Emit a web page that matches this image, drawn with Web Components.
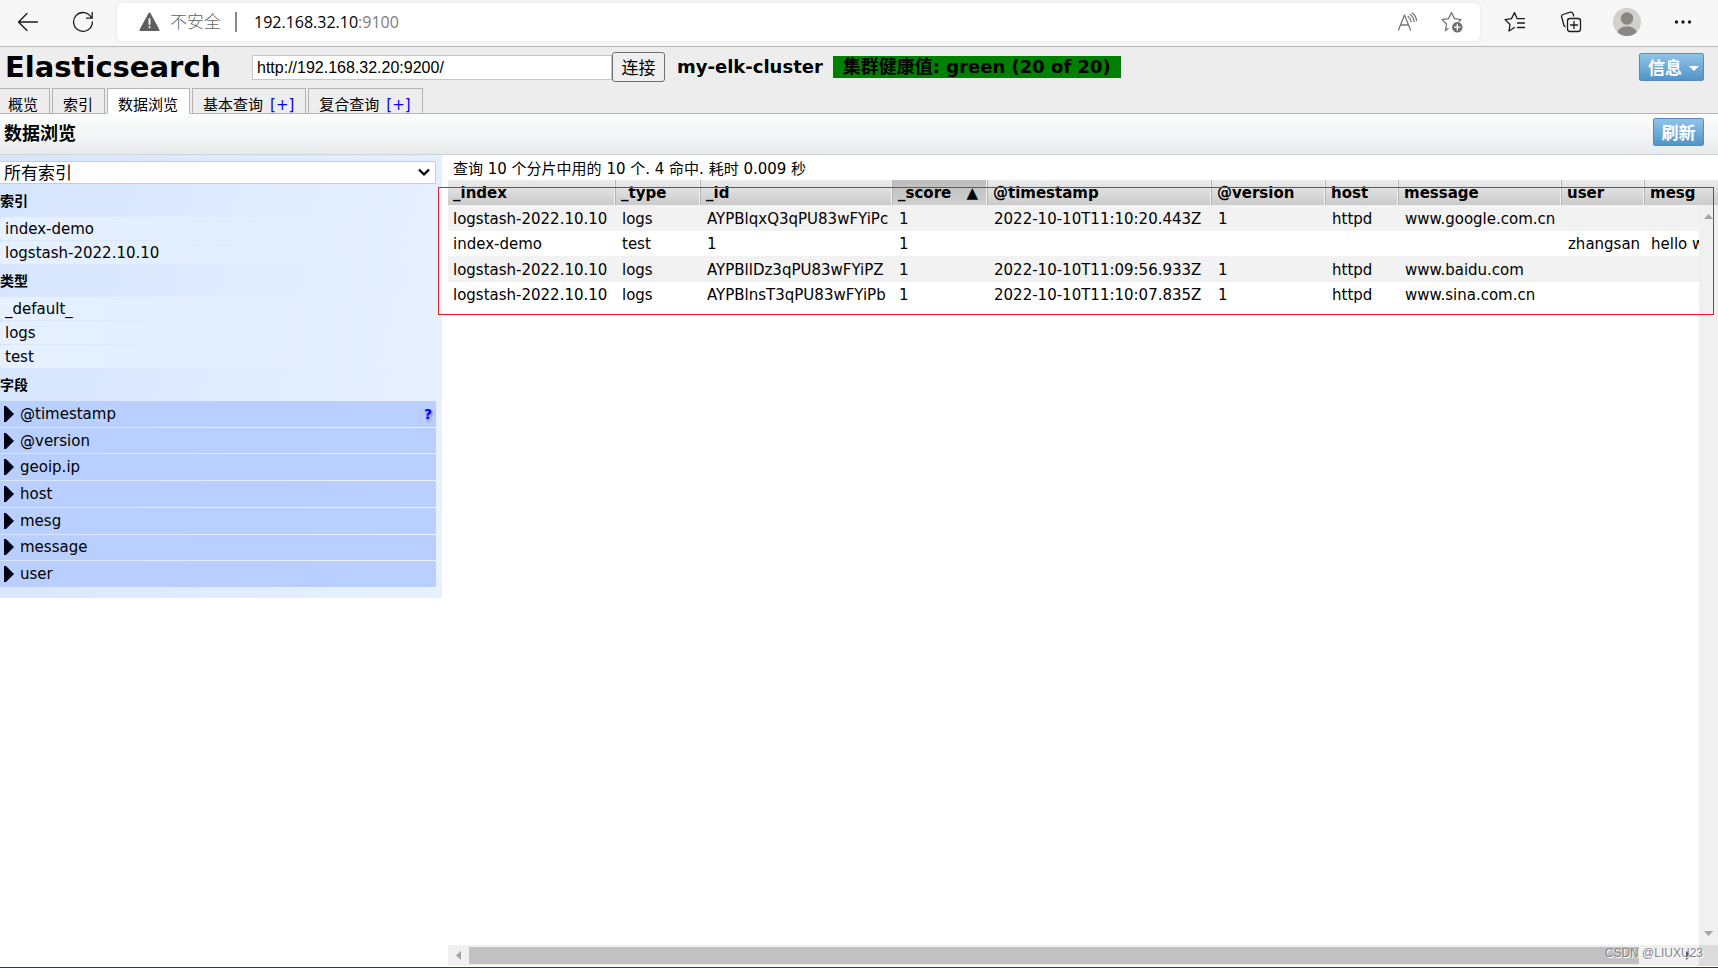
<!DOCTYPE html>
<html lang="zh-CN">
<head>
<meta charset="utf-8">
<title>elasticsearch-head</title>
<style>
html, body { margin: 0; height: 100%; }
body { font: 15px/20px "DejaVu Sans", "Noto Sans CJK SC", sans-serif; color: #000; background: #fff; }
</style>
</head>
<body>
<es-app></es-app>

<template id="browser-bar">
<style>
:host { display: flex; align-items: center; height: 46px; flex: none; background: #f7f7f7; border-bottom: 1px solid #b8b8b8; box-sizing: content-box; }
button { border: 0; padding: 0; background: none; display: grid; place-items: center; width: 55px; height: 38px; flex: none; }
svg { display: block; fill: none; stroke: #1a1a1a; stroke-width: 1.3; stroke-linecap: round; stroke-linejoin: round; }
.nav { display: flex; width: 117px; flex: none; margin-bottom: 2px; }
.address { flex: 1; min-width: 0; height: 38px; margin-bottom: 2px; border-radius: 6px; background: #fff; box-shadow: 0 0 4px #e4e4e4; display: flex; align-items: center; font-family: "Open Sans", "Noto Sans CJK SC", sans-serif; font-size: 16px; }
.warn { margin: 0 10px 0 22px; flex: none; }
.unsafe { font-size: 17px; color: #626262; font-weight: 300; }
.rule { width: 2px; height: 20px; background: #8a8a8a; margin: 0 17px 0 14px; }
.url { flex: 1; }
.port { color: #7c7c7c; }
.address svg.grey { stroke: #757575; }
.address button { width: 45px; }
.address button:last-child { margin-right: 6px; }
.tools { display: flex; margin-bottom: 2px; width: 238px; flex: none; }
.tools button { width: 56px; }
.tools button:first-child { margin-left: 7px; }
</style>
<div class="nav">
<button aria-label="返回"><svg width="22" height="20" viewBox="0 0 22 20"><path d="M20.500 10H1.500M10 1.500L1.500 10L10 18.500"/></svg></button>
<button aria-label="刷新页面"><svg width="22" height="22" viewBox="0 0 22 22"><path d="M19.300 6.500A9.400 9.400 0 1 0 20.400 11M20.200 1.500V7.200H14.500"/></svg></button>
</div>
<div class="address">
<svg class="warn" width="21" height="20" viewBox="0 0 21 20"><path d="M10.500 1.500L19.500 18H1.500Z" fill="#5f5f5f" stroke="#5f5f5f" stroke-width="2"/><path d="M10.500 7V12M10.500 15V15.300" stroke="#fff" stroke-width="1.800"/></svg>
<span class="unsafe">不安全</span><span class="rule"></span>
<span class="url">192.168.32.10<span class="port">:9100</span></span>
<button aria-label="朗读"><svg class="grey" width="20" height="20" viewBox="0 0 20 20"><path d="M1.500 18L7.500 3L13.500 18M3.500 13H11.500M11 4.500Q13.500 6 14 9.500M13 2.500Q16.500 4.500 17 9.500M15 1Q19 3.500 19.500 8.500"/></svg></button>
<button aria-label="收藏"><svg class="grey" width="22" height="22" viewBox="0 0 22 22"><path d="M7 17.500L4.500 19.500L5.500 13L1 8.600L7.500 7.600L10.500 1.500L13.500 7.600L20 8.600L18 10.500"/><circle cx="16.300" cy="16.200" r="5.200" fill="#6d6d6d" stroke="none"/><path d="M16.300 13.500V19M13.600 16.200H19" stroke="#fff"/></svg></button>
</div>
<div class="tools">
<button aria-label="收藏夹"><svg width="22" height="22" viewBox="0 0 22 22"><path d="M10.500 16.500L5 20L6 13.500L1 8.600L7.500 7.600L10.500 1.500L13 7.600H20.500M13.500 12H20.500M13.500 16.500H20.500"/></svg></button>
<button aria-label="集锦"><svg width="22" height="22" viewBox="0 0 22 22"><rect x="7.500" y="7.500" width="13" height="13" rx="2.500"/><path d="M14 10.500V17.500M10.500 14H17.500M5 15.500L4 14.500L1.500 5.500Q1.300 4 3 3.500L10.500 1.200Q12.500 1 13 2.800L13.700 5"/></svg></button>
<button aria-label="个人资料"><svg width="28" height="28" viewBox="0 0 28 28" stroke="none"><defs><clipPath id="c"><circle cx="14" cy="14" r="14"/></clipPath></defs><g clip-path="url(#c)" stroke="none"><rect width="28" height="28" fill="#d3d0cc"/><circle cx="14" cy="10.500" r="6.200" fill="#8b8784"/><path d="M3.500 28C4 21 8 18.500 14 18.500S24 21 24.500 28Z" fill="#8b8784"/></g></svg></button>
<button aria-label="更多"><svg width="18" height="6" viewBox="0 0 18 6"><g fill="#1a1a1a" stroke="none"><circle cx="2.500" cy="3" r="1.700"/><circle cx="9" cy="3" r="1.700"/><circle cx="15.500" cy="3" r="1.700"/></g></svg></button>
</div>
</template>

<template id="action-button">
<style>
:host { display: block; }
button { display: flex; align-items: center; justify-content: center; gap: 7px; width: 100%; height: 28px; box-sizing: border-box; padding: 2px 8px 0; border: 1px solid #5c88c8; border-radius: 2px; background: linear-gradient(#90c3e8, #5195c9); color: #fff; font: bold 17px/24px "DejaVu Sans", "Noto Sans CJK SC", sans-serif; white-space: nowrap; }
i { display: none; border: 5px solid transparent; border-top-color: #fff; border-bottom: 0; }
:host([menu]) i { display: block; }
:host([menu]) button { padding-right: 4px; }
</style>
<button><slot></slot><i></i></button>
</template>

<template id="cluster-header">
<style>
:host { display: flex; flex-direction: column; height: 66px; flex: none; background: #ededed; border-bottom: 1px solid #b4b4b4; }
.top { display: flex; align-items: center; height: 38px; padding: 2px 14px 0 0; box-sizing: border-box; }
h1 { margin: 0; padding-left: 5px; width: 252px; box-sizing: border-box; font-size: 29px; line-height: 36px; flex: none; }
form { display: flex; align-items: center; flex: none; }
input { box-sizing: border-box; width: 360px; height: 25px; border: 1px solid #c6c6c6; padding: 2px 4px 0; background: #fff; font: 16px "Liberation Sans", sans-serif; color: #000; }
form button { width: 53px; height: 30px; box-sizing: border-box; padding: 0; border: 1px solid #6f6f6f; border-radius: 3px; background: #efefef; color: #000; font: 17px/24px "Noto Sans CJK SC", sans-serif; }
.name { margin-left: 12px; font: bold 18px/22px "DejaVu Sans", sans-serif; white-space: nowrap; }
.health { margin: 0 auto 0 10px; padding: 0 10px; height: 22px; background: #008000; font-weight: bold; font-size: 18px; line-height: 22px; white-space: nowrap; }
nav { display: flex; gap: 2px; flex: 1; margin-bottom: -1px; align-items: flex-start; padding-top: 3px; }
.tab { box-sizing: border-box; height: 26px; border: 1px solid #b4b4b4; padding: 5px 11px 0 10px; line-height: 22px; white-space: nowrap; overflow: hidden; }
.tab:first-child { border-left: 0; padding-left: 8px; }
.tab.on { background: #fff; border-bottom-color: #fff; }
a { color: inherit; text-decoration: none; }
.add { color: #00f; margin-left: 7px; }
</style>
<div class="top">
<h1>Elasticsearch</h1>
<form><input type="text" aria-label="连接地址" value="http://192.168.32.20:9200/"><button type="button">连接</button></form>
<span class="name">my-elk-cluster</span>
<span class="health">集群健康值: green (20 of 20)</span>
<action-button menu>信息</action-button>
</div>
<nav>
<div class="tab"><a href="#overview">概览</a></div>
<div class="tab"><a href="#indices">索引</a></div>
<div class="tab on"><a href="#browser">数据浏览</a></div>
<div class="tab"><a href="#basic">基本查询</a><a class="add" href="#basic-new">[+]</a></div>
<div class="tab"><a href="#compound">复合查询</a><a class="add" href="#compound-new">[+]</a></div>
</nav>
</template>

<template id="page-title">
<style>
:host { display: flex; align-items: center; justify-content: space-between; height: 40px; flex: none; padding: 0 14px 0 4px; background: linear-gradient(#fdfefe, #e8ebed); border-bottom: 1px solid #ced3d6; }
h2 { margin: 0; font-size: 18px; line-height: 26px; }
action-button { width: 51px; margin-bottom: 4px; }
</style>
<h2><slot></slot></h2>
<action-button>刷新</action-button>
</template>

<template id="filter-group">
<style>
:host { display: block; }
h3 { margin: 0; font-size: 14px; line-height: 20px; padding: 6px 0; }
</style>
<h3></h3>
<slot></slot>
</template>

<template id="filter-item">
<style>
:host { display: block; margin-bottom: 1px; }
a { display: block; height: 23px; line-height: 24px; padding-left: 5px; border-radius: 4px; background: linear-gradient(90deg, #e7f1ff, #e7f1ff00); color: #000; text-decoration: none; }
</style>
<a href="#filter"><slot></slot></a>
</template>

<template id="field-row">
<style>
:host { display: flex; align-items: center; background: #b8cfff; min-height: 0; overflow: hidden; }
button { flex: 1; display: flex; align-items: center; gap: 6px; border: 0; padding: 0 0 0 4px; background: none; color: #000; font: inherit; text-align: left; }
svg { display: block; }
a { display: none; margin-right: 4px; color: #00f; font-weight: bold; font-size: 14px; text-decoration: none; text-shadow: 1px 2px 3px #777; }
:host([help]) a { display: block; }
</style>
<button><svg width="10" height="16" viewBox="0 0 10 16"><path d="M0 0H2L10 8L2 16H0Z" fill="#000012"/></svg><slot></slot></button><a href="#help">?</a>
</template>

<template id="filter-panel">
<style>
:host { display: block; flex: none; width: 442px; box-sizing: border-box; padding: 6px 6px 11px 0; background: linear-gradient(100deg, #d6e5ff, #e8f1ff); }
.pick { position: relative; margin-bottom: 1px; }
select { display: block; appearance: none; width: 100%; height: 23px; box-sizing: border-box; padding: 0 4px 2px; border: 1px solid #ccc; border-left: 0; border-radius: 0; background: #fff; color: #000; font: 17px/19px "Noto Sans CJK SC", sans-serif; }
.pick svg { position: absolute; right: 6px; top: 7px; pointer-events: none; }
.fields { display: grid; grid-auto-rows: 1fr; gap: 1px; height: 186px; }
</style>
<div class="pick"><select aria-label="选择索引"><option>所有索引</option></select><svg width="12" height="9" viewBox="0 0 12 9"><path d="M1 1.500L6 6.500L11 1.500" fill="none" stroke="#000" stroke-width="2.200"/></svg></div>
<filter-group label="索引"><filter-item>index-demo</filter-item><filter-item>logstash-2022.10.10</filter-item></filter-group>
<filter-group label="类型"><filter-item>_default_</filter-item><filter-item>logs</filter-item><filter-item>test</filter-item></filter-group>
<filter-group label="字段"><div class="fields"><field-row help>@timestamp</field-row><field-row>@version</field-row><field-row>geoip.ip</field-row><field-row>host</field-row><field-row>mesg</field-row><field-row>message</field-row><field-row>user</field-row></div></filter-group>
</template>

<template id="result-grid">
<style>
:host { display: flex; flex-direction: column; flex: 1; min-width: 0; margin-left: 6px; }
.summary { margin: 0; padding: 4px 5px 1px; height: 20px; white-space: nowrap; }
.pane { position: relative; flex: 1; min-height: 0; }
.clip { overflow: hidden; height: 100%; }
table { width: 100%; table-layout: fixed; border-collapse: separate; border-spacing: 0; }
th, td { text-align: left; white-space: nowrap; overflow: hidden; box-sizing: border-box; }
th { height: 25px; line-height: 23px; padding: 2px 0 0 5px; border-left: 1px solid #b4b4b4; border-right: 1px solid #f2f2f2; background: linear-gradient(#ececec, #cacaca); }
th:first-child { border-left: 0; }
th:last-child { border-right: 0; }
th.sorted { background: linear-gradient(#bdbdbd, #cfcfcf); }
.sorted div { display: flex; justify-content: space-between; padding-right: 8px; }
td { height: 25px; line-height: 23px; padding: 2px 0 0 7px; }
td:first-child { padding-left: 5px; }
tr:nth-child(odd) td { height: 26px; background: #f2f2f2; }
.v { position: absolute; top: 25px; right: 0; bottom: 0; width: 19px; background: #f0f0f0; display: flex; flex-direction: column; align-items: center; justify-content: space-between; padding: 9px 0; box-sizing: border-box; }
.h { flex: none; display: flex; align-items: center; height: 21px; background: #f0f0f0; margin-bottom: 1px; }
.h .thumb { flex: 1; height: 17px; background: #c1c1c1; margin-left: 8px; }
.h .left { margin-left: 8px; }
.h .right { margin: 0 8px 0 47px; }
.h .corner { width: 19px; height: 21px; background: #dcdcdc; }
svg { display: block; flex: none; }
.mark { position: absolute; left: -10px; right: 4px; top: 7px; height: 126px; border: 1px solid #ed1c24; pointer-events: none; }
</style>
<p class="summary">查询 10 个分片中用的 10 个. 4 命中. 耗时 0.009 秒</p>
<div class="pane">
<div class="clip"><table><colgroup></colgroup><thead><tr></tr></thead><tbody></tbody></table></div>
<div class="v"><svg width="9" height="5" viewBox="0 0 9 5"><path d="M0 5L4.500 0L9 5Z" fill="#a3a3a3"/></svg><svg width="9" height="5" viewBox="0 0 9 5"><path d="M0 0L4.500 5L9 0Z" fill="#a3a3a3"/></svg></div>
<div class="mark"></div>
</div>
<div class="h"><svg class="left" width="5" height="9" viewBox="0 0 5 9"><path d="M5 0L0 4.500L5 9Z" fill="#a3a3a3"/></svg><div class="thumb"></div><svg class="right" width="5" height="9" viewBox="0 0 5 9"><path d="M0 0L5 4.500L0 9Z" fill="#444"/></svg><div class="corner"></div></div>
</template>

<template id="es-app">
<style>
:host { display: flex; flex-direction: column; height: 100vh; box-sizing: border-box; border-bottom: 1px solid #1d4257; position: relative; overflow: hidden; }
main { flex: 1; display: flex; align-items: stretch; min-height: 0; }
filter-panel { align-self: flex-start; }
.credit { position: absolute; right: 15px; bottom: 6px; font: 12px/16px "Liberation Sans", sans-serif; color: #858585; text-shadow: 1px 1px 0 #fff; }
</style>
<browser-bar></browser-bar>
<cluster-header></cluster-header>
<page-title>数据浏览</page-title>
<main><filter-panel></filter-panel><result-grid></result-grid></main>
<span class="credit">CSDN @LIUXU23</span>
</template>

<script>
class Base extends HTMLElement {
  constructor() {
    super();
    const t = document.getElementById(this.localName);
    this.attachShadow({ mode: "open" }).append(t.content.cloneNode(true));
  }
}
for (const name of ["browser-bar", "action-button", "cluster-header", "page-title", "filter-item", "field-row"])
  customElements.define(name, class extends Base {});

customElements.define("filter-group", class extends Base {
  connectedCallback() { this.shadowRoot.querySelector("h3").textContent = this.getAttribute("label"); }
});
customElements.define("filter-panel", class extends Base {});

const columns = [["_index", 167], ["_type", 85], ["_id", 192], ["_score", 95], ["@timestamp", 224],
  ["@version", 114], ["host", 73], ["message", 163], ["user", 83], ["mesg", 0]];
const hits = [
  ["logstash-2022.10.10", "logs", "AYPBlqxQ3qPU83wFYiPc", "1", "2022-10-10T11:10:20.443Z", "1", "httpd", "www.google.com.cn", "", ""],
  ["index-demo", "test", "1", "1", "", "", "", "", "zhangsan", "hello w"],
  ["logstash-2022.10.10", "logs", "AYPBllDz3qPU83wFYiPZ", "1", "2022-10-10T11:09:56.933Z", "1", "httpd", "www.baidu.com", "", ""],
  ["logstash-2022.10.10", "logs", "AYPBlnsT3qPU83wFYiPb", "1", "2022-10-10T11:10:07.835Z", "1", "httpd", "www.sina.com.cn", "", ""]
];
customElements.define("result-grid", class extends Base {
  connectedCallback() {
    const $ = s => this.shadowRoot.querySelector(s);
    $("colgroup").innerHTML = columns.map(([, w]) => w ? `<col style="width:${w}px">` : "<col>").join("");
    $("thead tr").innerHTML = columns.map(([n]) => n === "_score"
      ? `<th class="sorted" aria-sort="ascending"><div><span>${n}</span><span>▲</span></div></th>` : `<th>${n}</th>`).join("");
    $("tbody").innerHTML = hits.map(r => `<tr>${r.map(c => `<td>${c}</td>`).join("")}</tr>`).join("");
  }
});
customElements.define("es-app", class extends Base {});
</script>
</body>
</html>
